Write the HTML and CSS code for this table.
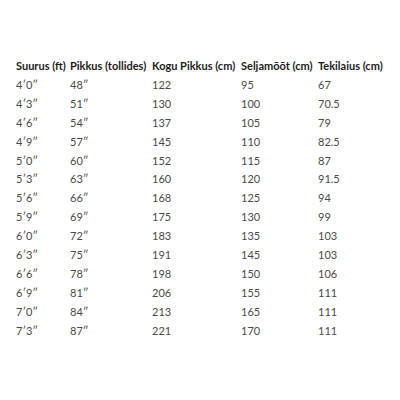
FILE: index.html
```html
<!DOCTYPE html>
<html>
<head>
<meta charset="utf-8">
<link rel="stylesheet" href="styles.css">
</head>
<body>
<table class="size-table">
  <colgroup>
    <col class="c1"><col class="c2"><col class="c3"><col class="c4"><col class="c5">
  </colgroup>
  <thead>
    <tr><th>Suurus (ft)</th><th>Pikkus (tollides)</th><th>Kogu Pikkus (cm)</th><th>Seljamõõt (cm)</th><th>Tekilaius (cm)</th></tr>
  </thead>
  <tbody>
    <tr><td>4′0″</td><td>48″</td><td>122</td><td>95</td><td>67</td></tr>
    <tr><td>4′3″</td><td>51″</td><td>130</td><td>100</td><td>70.5</td></tr>
    <tr><td>4′6″</td><td>54″</td><td>137</td><td>105</td><td>79</td></tr>
    <tr><td>4′9″</td><td>57″</td><td>145</td><td>110</td><td>82.5</td></tr>
    <tr><td>5′0″</td><td>60″</td><td>152</td><td>115</td><td>87</td></tr>
    <tr><td>5′3″</td><td>63″</td><td>160</td><td>120</td><td>91.5</td></tr>
    <tr><td>5′6″</td><td>66″</td><td>168</td><td>125</td><td>94</td></tr>
    <tr><td>5′9″</td><td>69″</td><td>175</td><td>130</td><td>99</td></tr>
    <tr><td>6′0″</td><td>72″</td><td>183</td><td>135</td><td>103</td></tr>
    <tr><td>6′3″</td><td>75″</td><td>191</td><td>145</td><td>103</td></tr>
    <tr><td>6′6″</td><td>78″</td><td>198</td><td>150</td><td>106</td></tr>
    <tr><td>6′9″</td><td>81″</td><td>206</td><td>155</td><td>111</td></tr>
    <tr><td>7′0″</td><td>84″</td><td>213</td><td>165</td><td>111</td></tr>
    <tr><td>7′3″</td><td>87″</td><td>221</td><td>170</td><td>111</td></tr>
  </tbody>
</table>
</body>
</html>
```

FILE: styles.css
```css
html, body {
  margin: 0;
  padding: 0;
  background: #ffffff;
}
body {
  font-family: "Lato", "Open Sans", sans-serif;
}
.size-table {
  margin: 55px 0 0 16px;
  border-collapse: collapse;
  table-layout: fixed;
  width: 376px;
}
.c1 { width: 54px; }
.c2 { width: 82px; }
.c3 { width: 89px; }
.c4 { width: 77px; }
.c5 { width: 74px; }
.size-table th,
.size-table td {
  padding: 0;
  text-align: left;
  white-space: nowrap;
  vertical-align: middle;
}
.size-table th {
  height: 20px;
  font-size: 11px;
  font-weight: 700;
  color: #1c1c1c;
}
.size-table td {
  height: 18.9px;
  font-size: 11px;
  color: #4a4a4a;
}
```
